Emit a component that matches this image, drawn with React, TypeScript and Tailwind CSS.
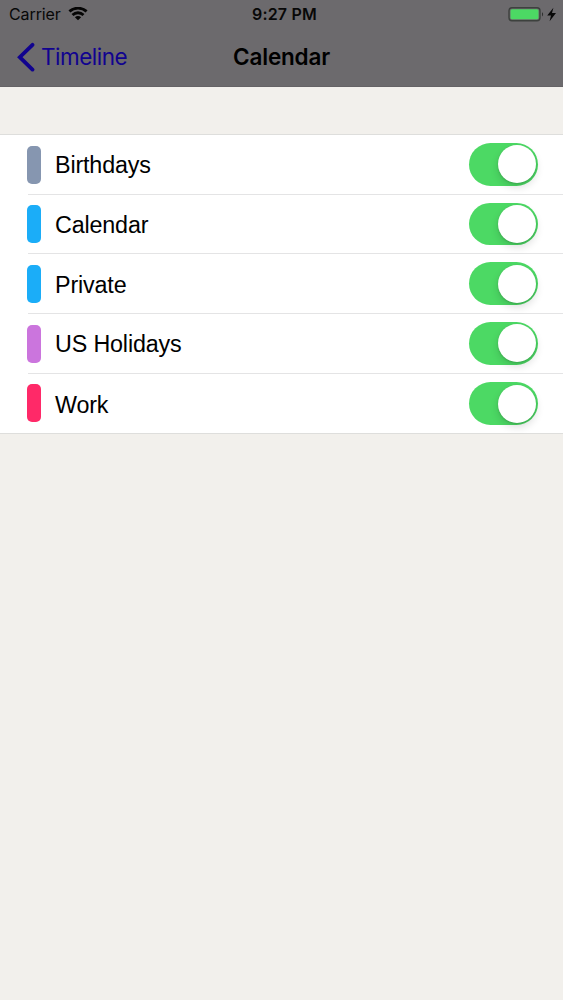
import React, { useState } from 'react';

const initialCalendars = [
  { name: 'Birthdays', color: '#8696b0', enabled: true },
  { name: 'Calendar', color: '#1badf8', enabled: true },
  { name: 'Private', color: '#1badf8', enabled: true },
  { name: 'US Holidays', color: '#cb75dd', enabled: true },
  { name: 'Work', color: '#ff2968', enabled: true },
];

function WifiIcon() {
  return (
    <svg className="ml-[7px] h-[14px] w-5" viewBox="0 0 20 14" fill="none" stroke="#050505" strokeWidth="2.8">
      <path d="M1.4 4.4C6.2.1 13.8.1 18.6 4.4" />
      <path d="M4.5 8C7.7 5 12.3 5 15.5 8" />
      <path d="M10 13.2 6.9 10.3C8.6 8.7 11.4 8.7 13.1 10.3Z" fill="#050505" stroke="none" />
    </svg>
  );
}

function BatteryIcon() {
  return (
    <svg className="h-[17px] w-[50px]" viewBox="0 0 50 17">
      <rect x="1" y="1.8" width="31" height="13" rx="3" fill="none" stroke="#3d413e" strokeWidth="1.4" />
      <rect x="2.5" y="3.3" width="28" height="10" rx="1.5" fill="#4cd964" />
      <path d="M34 6.2C35.5 6.8 35.5 9.8 34 10.4Z" fill="#303130" />
      <path d="M45.4 1.8 39.2 9.5H43L41.6 15.3 48 7.1H44Z" fill="#080808" />
    </svg>
  );
}

function Toggle({ on, label, onChange }: { on: boolean; label: string; onChange: () => void }) {
  return (
    <button
      type="button"
      role="switch"
      aria-checked={on}
      aria-label={label}
      onClick={onChange}
      className={`flex h-[42.5px] w-[69px] items-center rounded-full px-[2px] ${
        on ? 'justify-end bg-[#4cd964]' : 'justify-start bg-[#e5e5e5]'
      }`}
    >
      <span className="size-[38px] rounded-full bg-white shadow-[0_4px_8px_rgba(0,0,0,0.14),0_1px_2px_rgba(0,0,0,0.14)]" />
    </button>
  );
}

export default function App() {
  const [calendars, setCalendars] = useState(initialCalendars);

  const toggleCalendar = (name: string) => {
    setCalendars(calendars.map((c) => (c.name === name ? { ...c, enabled: !c.enabled } : c)));
  };

  return (
    <div className="min-h-screen bg-[#f2f0ec] font-['Liberation_Sans',sans-serif] text-black">
      <header className="h-[87px] border-b border-[#656366] bg-[#6c6a6d] font-['Inter',sans-serif]">
        <div className="grid h-[28px] grid-cols-3 items-center pl-[9px] pr-[5px] text-[16px] text-[#080808]">
          <div className="flex items-center">
            <span className="tracking-[-0.1px]">Carrier</span>
            <WifiIcon />
          </div>
          <span className="pl-[2px] text-center font-semibold tracking-[0.2px]">9:27 PM</span>
          <div className="flex justify-end">
            <BatteryIcon />
          </div>
        </div>
        <div className="grid h-[58px] grid-cols-3 items-center pl-[17px] pr-[17px]">
          <button type="button" className="flex items-center gap-[6px] text-[22.5px] text-[#11038f]">
            <svg className="h-[30px] w-[18px]" viewBox="0 0 18 30" fill="none" stroke="currentColor" strokeWidth="3.8">
              <path d="M15.5 2.8 2.8 15.2 15.5 27.6" strokeLinecap="round" />
            </svg>
            <span className="tracking-[-0.5px]">Timeline</span>
          </button>
          <h1 className="text-center text-[22.5px] font-semibold tracking-[-0.2px]">Calendar</h1>
        </div>
      </header>

      <ul className="mt-[47px] border-y border-[#dededc] bg-white">
        {calendars.map((calendar, index) => (
          <li key={calendar.name} className="flex h-[59.7px] pl-[27px]">
            <span
              className="mt-[10.6px] h-[38px] w-[14px] rounded-[5px]"
              style={{ backgroundColor: calendar.color }}
            />
            <div
              className={`-ml-[13px] flex flex-1 items-center justify-between pl-[27px] pr-[25px] ${
                index < calendars.length - 1 ? 'border-b border-[#e4e4e5]' : ''
              }`}
            >
              <span className="pt-[3px] text-[23.3px] tracking-[-0.15px]">{calendar.name}</span>
              <Toggle
                on={calendar.enabled}
                label={calendar.name}
                onChange={() => toggleCalendar(calendar.name)}
              />
            </div>
          </li>
        ))}
      </ul>
    </div>
  );
}
